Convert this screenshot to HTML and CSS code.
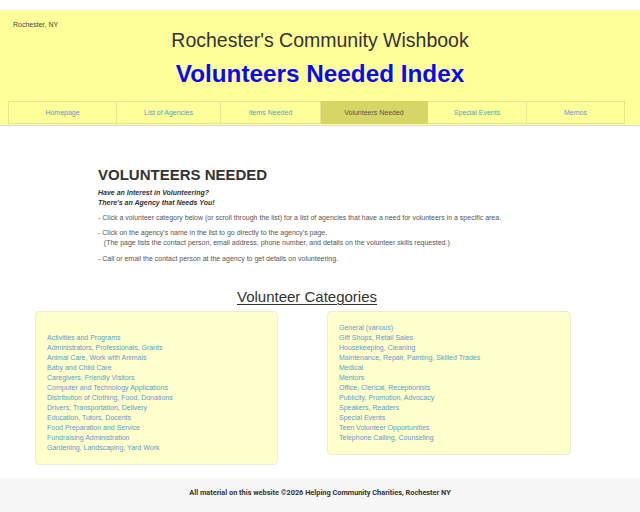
FILE: index.html
```html
<!DOCTYPE html>
<html lang="en">
<head>
<meta charset="utf-8">
<title>Volunteers Needed Index</title>
<link rel="stylesheet" href="styles.css">
</head>
<body>
<header class="site-header">
  <div class="location">Rochester, NY</div>
  <h1 class="site-title">Rochester's Community Wishbook</h1>
  <div class="page-title">Volunteers Needed Index</div>
  <nav class="nav">
    <a class="nav-item" href="#">Homepage</a>
    <a class="nav-item" href="#">List of Agencies</a>
    <a class="nav-item" href="#">Items Needed</a>
    <a class="nav-item active" href="#">Volunteers Needed</a>
    <a class="nav-item" href="#">Special Events</a>
    <a class="nav-item" href="#">Memos</a>
  </nav>
</header>

<main class="main">
  <section class="intro">
    <h2 class="intro-title">VOLUNTEERS NEEDED</h2>
    <div class="tagline">Have an Interest in Volunteering?<br>There's an Agency that Needs You!</div>
    <p class="step">- Click a volunteer category below (or scroll through the list) for a list of agencies that have a need for volunteers in a specific area.</p>
    <p class="step">- Click on the agency's name in the list to go directly to the agency's page.<br>&nbsp;&nbsp;&nbsp;(The page lists the contact person, email address, phone number, and details on the volunteer skills requested.)</p>
    <p class="step step-last">- Call or email the contact person at the agency to get details on volunteering.</p>
  </section>

  <section class="categories">
    <h3 class="cat-title">Volunteer Categories</h3>
    <div class="cat-grid">
      <ul class="cat-box">
        <li class="blank">&nbsp;</li>
        <li><a href="#">Activities and Programs</a></li>
        <li><a href="#">Administrators, Professionals, Grants</a></li>
        <li><a href="#">Animal Care, Work with Animals</a></li>
        <li><a href="#">Baby and Child Care</a></li>
        <li><a href="#">Caregivers, Friendly Visitors</a></li>
        <li><a href="#">Computer and Technology Applications</a></li>
        <li><a href="#">Distribution of Clothing, Food, Donations</a></li>
        <li><a href="#">Drivers, Transportation, Delivery</a></li>
        <li><a href="#">Education, Tutors, Docents</a></li>
        <li><a href="#">Food Preparation and Service</a></li>
        <li><a href="#">Fundraising Administration</a></li>
        <li><a href="#">Gardening, Landscaping, Yard Work</a></li>
      </ul>
      <ul class="cat-box">
        <li><a href="#">General (various)</a></li>
        <li><a href="#">Gift Shops, Retail Sales</a></li>
        <li><a href="#">Housekeeping, Cleaning</a></li>
        <li><a href="#">Maintenance, Repair, Painting, Skilled Trades</a></li>
        <li><a href="#">Medical</a></li>
        <li><a href="#">Mentors</a></li>
        <li><a href="#">Office, Clerical, Receptionists</a></li>
        <li><a href="#">Publicity, Promotion, Advocacy</a></li>
        <li><a href="#">Speakers, Readers</a></li>
        <li><a href="#">Special Events</a></li>
        <li><a href="#">Teen Volunteer Opportunities</a></li>
        <li><a href="#">Telephone Calling, Counseling</a></li>
      </ul>
    </div>
  </section>
</main>

<footer class="footer">All material on this website ©2026 Helping Community Charities, Rochester NY</footer>
</body>
</html>
```

FILE: styles.css
```css
* { box-sizing: border-box; }

body {
  margin: 0;
  font-family: "Liberation Sans", Arial, sans-serif;
  font-size: 7px;
  line-height: 10px;
  color: #555;
  background: #fff;
}

a { text-decoration: none; color: #5b9bd1; }

.site-header {
  margin-top: 10px;
  background: #ffff99;
  padding: 10px 0 1px;
  box-shadow: 0 1px 1px #ddd;
}

.location {
  padding-left: 13px;
  color: #444;
  line-height: 10px;
}

.site-title {
  margin: -1px 0 0;
  text-align: center;
  font-weight: normal;
  font-size: 19.5px;
  line-height: 22px;
  color: #333;
}

.page-title {
  margin-top: 9px;
  text-align: center;
  font-weight: bold;
  font-size: 24.3px;
  line-height: 28px;
  color: #0a0af0;
}

.nav {
  margin: 13px 15px 0 8px;
  display: grid;
  grid-template-columns: 109fr 104fr 100fr 107fr 99fr 98fr;
}

.nav-item {
  display: block;
  height: 23px;
  line-height: 21px;
  text-align: center;
  border: 1px solid #e6e68c;
  border-left: none;
  color: #5b9bd1;
}

.nav-item:first-child { border-left: 1px solid #e6e68c; }

.nav-item.active {
  background: #d6d664;
  color: #555;
  border-color: #d6d664;
}

.main { display: block; }

.intro {
  margin: 41px 0 0 98px;
  width: 444px;
}

.intro-title {
  margin: 0;
  font-size: 15px;
  line-height: 18px;
  font-weight: bold;
  color: #333;
}

.tagline {
  margin-top: 4px;
  font-weight: bold;
  font-style: italic;
  color: #333;
}

.step {
  margin: 5px 0 0;
  white-space: nowrap;
}

.step-last { margin-top: 6px; }

.categories {
  margin-left: 35px;
  width: 544px;
  margin-top: 24px;
}

.cat-title {
  margin: 0;
  text-align: center;
  font-size: 15px;
  line-height: 18px;
  font-weight: normal;
  color: #333;
  text-decoration: underline;
  text-underline-offset: 2px;
  text-decoration-thickness: 1px;
}

.cat-grid {
  margin-top: 5px;
  display: grid;
  grid-template-columns: 243px 244px;
  column-gap: 49px;
  align-items: start;
}

.cat-box {
  list-style: none;
  margin: 0;
  padding: 11px;
  background: #ffffcc;
  border: 1px solid #ececd8;
  border-radius: 4px;
}

.cat-box li { line-height: 10px; height: 10px; }

.footer {
  margin-top: 13px;
  background: #f7f7f7;
  padding: 10px 0 15px;
  text-align: center;
  font-weight: bold;
  font-size: 7.35px;
  color: #333;
  font-family: Roboto, "Liberation Sans", sans-serif;
}
```
